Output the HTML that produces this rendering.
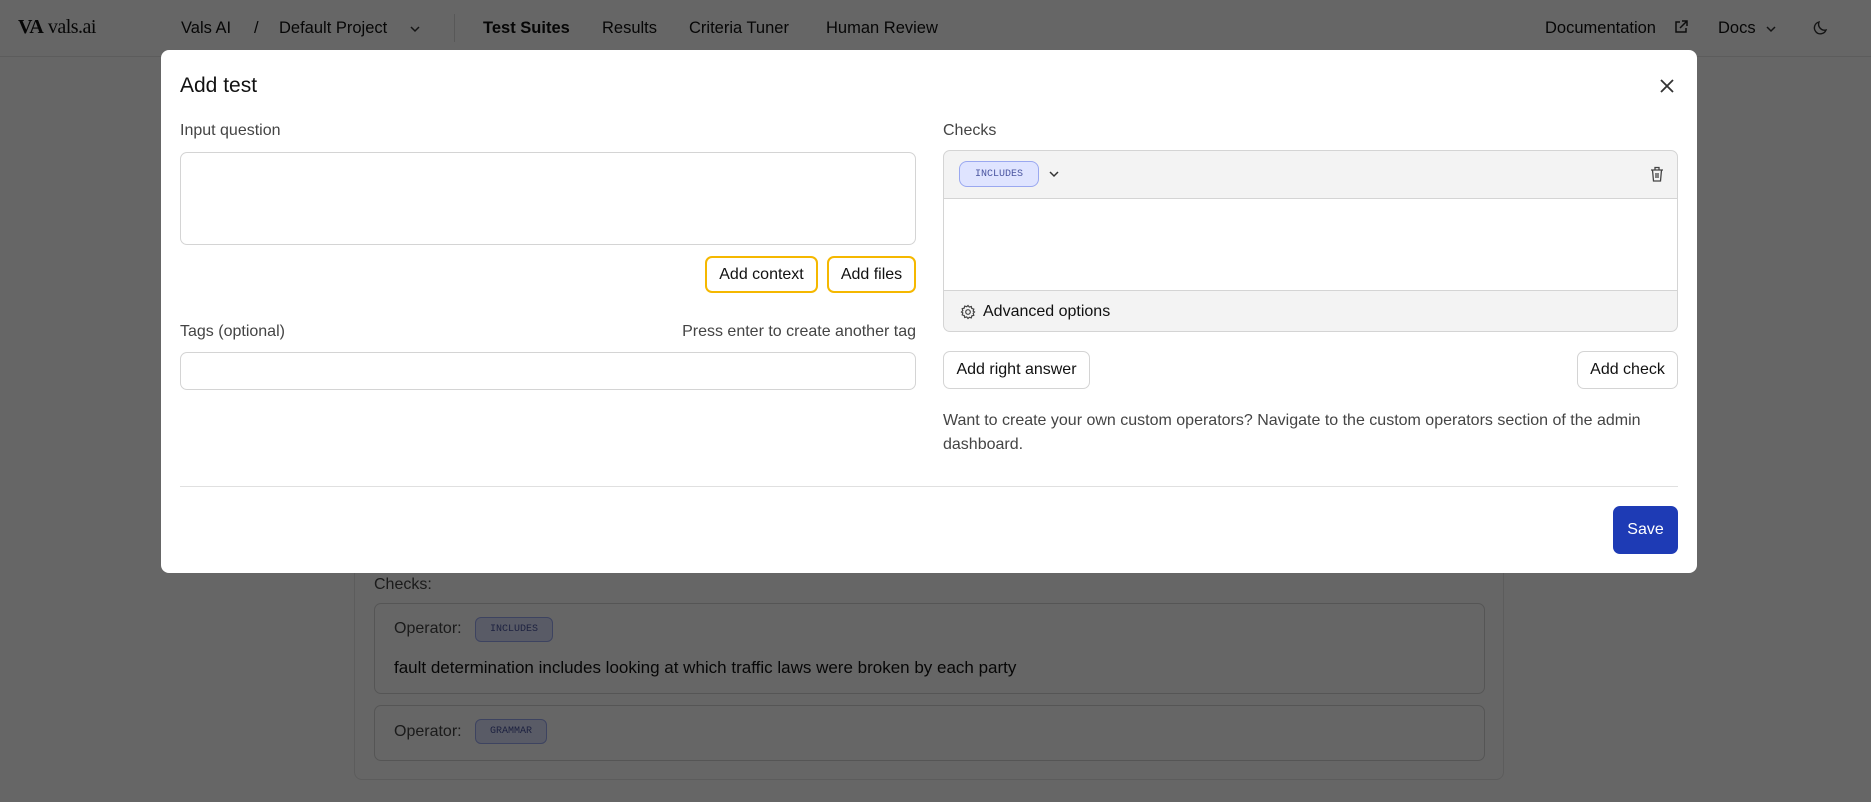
<!DOCTYPE html>
<html><head><meta charset="utf-8"><style>
*{box-sizing:border-box;margin:0;padding:0}
body{width:1871px;height:802px;overflow:hidden;background:#fff;font-family:"Liberation Sans",sans-serif;color:#111;position:relative;font-size:16px}
.a{position:absolute}
.nav{left:0;top:0;width:1871px;height:57px;border-bottom:1px solid #e5e5e5}
.nav .t{top:19px;font-size:16.5px}
.ov{left:0;top:0;width:1871px;height:802px;background:rgba(0,0,0,.6)}
.m{left:161px;top:50px;width:1536px;height:523px;background:#fff;border-radius:8px}
.lbl{color:#444;font-size:16px}
.box{border:1px solid #d4d4d4;border-radius:7px;background:#fff}
.btn{border:1px solid #d4d4d4;border-radius:7px;background:#fff;font-size:16px;display:flex;align-items:center;justify-content:center;color:#111}
.yb{border:2px solid #f5b800}
.tag{font-family:"Liberation Mono",monospace;font-size:10px;color:#4a55a0;background:#dfe4ff;border:1px solid #9aa8f0;border-radius:6px;display:flex;align-items:center;justify-content:center}
</style></head><body>
<div class="a nav">
 <div class="a" style="left:18px;top:16px;font-family:'Liberation Serif',serif;font-size:20px;letter-spacing:-0.5px"><b style="font-weight:700">VA</b> vals.ai</div>
 <div class="a t" style="left:181px">Vals AI</div>
 <div class="a t" style="left:254px">/</div>
 <div class="a t" style="left:279px">Default Project</div>
 <svg class="a" style="left:408px;top:22px" width="14" height="14" viewBox="0 0 14 14"><path d="M3 5l4 4 4-4" fill="none" stroke="#333" stroke-width="1.5"/></svg>
 <div class="a" style="left:454px;top:14px;width:1px;height:28px;background:#ddd"></div>
 <div class="a t" style="left:483px;font-weight:700">Test Suites</div>
 <div class="a t" style="left:602px">Results</div>
 <div class="a t" style="left:689px">Criteria Tuner</div>
 <div class="a t" style="left:826px">Human Review</div>
 <div class="a t" style="left:1545px">Documentation</div>
 <svg class="a" style="left:1673px;top:19px" width="16" height="16" viewBox="0 0 16 16" fill="none" stroke="#222" stroke-width="1.5"><path d="M7 3H3v10h10V9M9 2h5v5M14 2L7 9"/></svg>
 <div class="a t" style="left:1718px">Docs</div>
 <svg class="a" style="left:1764px;top:22px" width="14" height="14" viewBox="0 0 14 14"><path d="M3 5l4 4 4-4" fill="none" stroke="#333" stroke-width="1.5"/></svg>
 <svg class="a" style="left:1812px;top:19px" width="18" height="18" viewBox="0 0 18 18"><path d="M14 11A6 6 0 0 1 7 3a6 6 0 1 0 7 8z" fill="none" stroke="#333" stroke-width="1.4"/></svg>
</div>
<div class="a" style="left:354px;top:540px;width:1150px;height:240px;border:1px solid #e5e5e5;border-radius:8px">
 <div class="a lbl" style="left:19px;top:35px">Checks:</div>
 <div class="a box" style="left:19px;top:62px;width:1111px;height:91px">
  <div class="a lbl" style="left:19px;top:16px">Operator:</div>
  <div class="a tag" style="left:100px;top:13px;width:78px;height:25px">INCLUDES</div>
  <div class="a" style="left:19px;top:54px;font-size:17px">fault determination includes looking at which traffic laws were broken by each party</div>
 </div>
 <div class="a box" style="left:19px;top:164px;width:1111px;height:56px">
  <div class="a lbl" style="left:19px;top:17px">Operator:</div>
  <div class="a tag" style="left:100px;top:13px;width:72px;height:25px">GRAMMAR</div>
 </div>
</div>
<div class="a ov"></div>
<div class="a m">
 <div class="a" style="left:19px;top:24px;font-size:21px">Add test</div>
 <svg class="a" style="left:1497px;top:27px" width="18" height="18" viewBox="0 0 18 18"><path d="M3 3l12 12M15 3L3 15" stroke="#333" stroke-width="1.8"/></svg>
 <div class="a lbl" style="left:19px;top:72px">Input question</div>
 <div class="a box" style="left:19px;top:102px;width:736px;height:93px"></div>
 <div class="a btn yb" style="left:544px;top:206px;width:113px;height:37px">Add context</div>
 <div class="a btn yb" style="left:666px;top:206px;width:89px;height:37px">Add files</div>
 <div class="a lbl" style="left:19px;top:273px">Tags (optional)</div>
 <div class="a lbl" style="left:512px;top:273px;width:243px;text-align:right">Press enter to create another tag</div>
 <div class="a box" style="left:19px;top:302px;width:736px;height:38px"></div>
 <div class="a lbl" style="left:782px;top:72px">Checks</div>
 <div class="a" style="left:782px;top:100px;width:735px;height:182px;border:1px solid #d4d4d4;border-radius:7px;background:#f3f3f3;overflow:hidden">
  <div class="a tag" style="left:15px;top:10px;width:80px;height:26px;border-radius:8px">INCLUDES</div>
  <svg class="a" style="left:103px;top:16px" width="14" height="14" viewBox="0 0 14 14"><path d="M3 5l4 4 4-4" fill="none" stroke="#333" stroke-width="1.5"/></svg>
  <svg class="a" style="left:705px;top:14px" width="16" height="18" viewBox="0 0 16 18" fill="none" stroke="#444" stroke-width="1.3"><path d="M2 5h12M6 5V2.5h4V5M3.5 5l1 11h7l1-11M7 8v5M9 8v5"/></svg>
  <div class="a" style="left:0;top:47px;width:735px;height:93px;background:#fff;border-top:1px solid #d4d4d4;border-bottom:1px solid #d4d4d4"></div>
  <svg class="a" style="left:16px;top:153px" width="16" height="16" viewBox="0 0 16 16" fill="none" stroke="#444" stroke-width="1.2"><circle cx="8" cy="8" r="2.3"/><path d="M8 1.5l1.3 1.6 2-.6.5 2 2 .6-.6 2L14.5 8l-1.3 1.3.6 2-2 .6-.5 2-2-.6L8 14.5l-1.3-1.6-2 .6-.5-2-2-.6.6-2L1.5 8l1.3-1.3-.6-2 2-.6.5-2 2 .6z"/></svg>
  <div class="a" style="left:39px;top:152px">Advanced options</div>
 </div>
 <div class="a btn" style="left:782px;top:301px;width:147px;height:38px">Add right answer</div>
 <div class="a btn" style="left:1416px;top:301px;width:101px;height:38px">Add check</div>
 <div class="a lbl" style="left:782px;top:359px;width:730px;line-height:24px">Want to create your own custom operators? Navigate to the custom operators section of the admin dashboard.</div>
 <div class="a" style="left:19px;top:436px;width:1498px;height:1px;background:#e0e0e0"></div>
 <div class="a btn" style="left:1452px;top:456px;width:65px;height:48px;background:#1e3bb5;border-color:#1e3bb5;color:#fff">Save</div>
</div>
</body></html>
